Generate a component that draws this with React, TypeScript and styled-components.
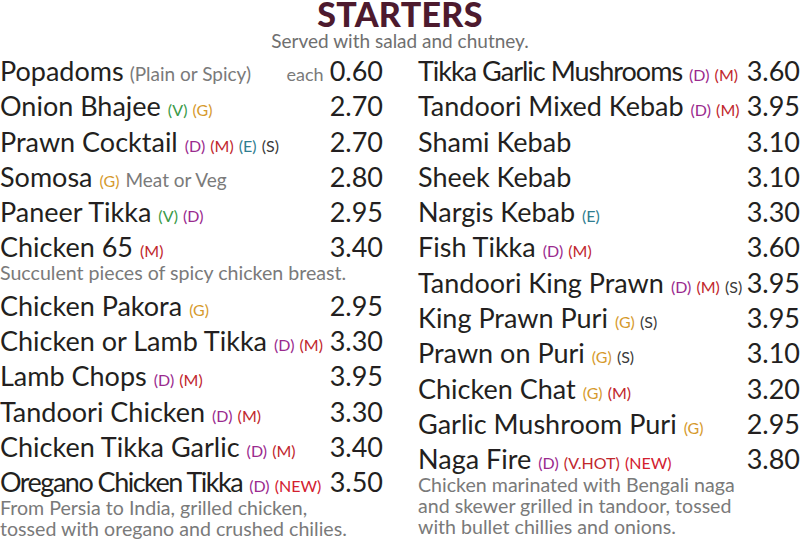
import * as React from 'react';
import styled, { createGlobalStyle } from 'styled-components';

const GlobalStyle = createGlobalStyle`
	html, body {
		margin: 0;
		padding: 0;
		background: #ffffff;
	}
	body {
		font-family: Lato, 'Noto Sans', sans-serif;
		color: #231f20;
		overflow: hidden;
	}
`;

type TagKind = 'V' | 'G' | 'D' | 'M' | 'E' | 'S' | 'V.HOT' | 'NEW';

interface Item {
	name: string;
	tags?: TagKind[];
	note?: string;
	each?: boolean;
	price: string;
	desc?: string[];
	tight?: number;
}

const tagColours: Record<TagKind, string> = {
	V: '#3a9a48',
	G: '#d69a2d',
	D: '#9a2a8e',
	M: '#c1272d',
	E: '#2f7d90',
	S: '#3a3a3a',
	'V.HOT': '#c1272d',
	NEW: '#d3202f',
};

const leftItems: Item[] = [
	{ name: 'Popadoms', note: '(Plain or Spicy)', each: true, price: '0.60' },
	{ name: 'Onion Bhajee', tags: ['V', 'G'], price: '2.70' },
	{ name: 'Prawn Cocktail', tags: ['D', 'M', 'E', 'S'], price: '2.70' },
	{ name: 'Somosa', tags: ['G'], note: 'Meat or Veg', price: '2.80' },
	{ name: 'Paneer Tikka', tags: ['V', 'D'], price: '2.95' },
	{
		name: 'Chicken 65',
		tags: ['M'],
		price: '3.40',
		desc: ['Succulent pieces of spicy chicken breast.'],
	},
	{ name: 'Chicken Pakora', tags: ['G'], price: '2.95' },
	{ name: 'Chicken or Lamb Tikka', tags: ['D', 'M'], price: '3.30' },
	{ name: 'Lamb Chops', tags: ['D', 'M'], price: '3.95' },
	{ name: 'Tandoori Chicken', tags: ['D', 'M'], price: '3.30' },
	{ name: 'Chicken Tikka Garlic', tags: ['D', 'M'], price: '3.40' },
	{
		name: 'Oregano Chicken Tikka',
		tags: ['D', 'NEW'],
		price: '3.50',
		tight: -1.5,
		desc: [
			'From Persia to India, grilled chicken,',
			'tossed with oregano and crushed chilies.',
		],
	},
];

const rightItems: Item[] = [
	{ name: 'Tikka Garlic Mushrooms', tags: ['D', 'M'], price: '3.60', tight: -1 },
	{ name: 'Tandoori Mixed Kebab', tags: ['D', 'M'], price: '3.95' },
	{ name: 'Shami Kebab', price: '3.10' },
	{ name: 'Sheek Kebab', price: '3.10' },
	{ name: 'Nargis Kebab', tags: ['E'], price: '3.30' },
	{ name: 'Fish Tikka', tags: ['D', 'M'], price: '3.60' },
	{ name: 'Tandoori King Prawn', tags: ['D', 'M', 'S'], price: '3.95' },
	{ name: 'King Prawn Puri', tags: ['G', 'S'], price: '3.95' },
	{ name: 'Prawn on Puri', tags: ['G', 'S'], price: '3.10' },
	{ name: 'Chicken Chat', tags: ['G', 'M'], price: '3.20' },
	{ name: 'Garlic Mushroom Puri', tags: ['G'], price: '2.95' },
	{
		name: 'Naga Fire',
		tags: ['D', 'V.HOT', 'NEW'],
		price: '3.80',
		desc: [
			'Chicken marinated with Bengali naga',
			'and skewer grilled in tandoor, tossed',
			'with bullet chillies and onions.',
		],
	},
];

const Page = styled.main`
	width: 800px;
	height: 539px;
	display: flex;
	flex-direction: column;
	overflow: hidden;
`;

const Header = styled.header`
	display: flex;
	flex-direction: column;
	align-items: center;
	margin-bottom: 1px;
`;

const Title = styled.h1`
	margin: 0;
	font-family: Lato, sans-serif;
	font-weight: 900;
	font-size: 34px;
	line-height: 28px;
	letter-spacing: 0.3px;
	color: #4d1a2e;
`;

const Subtitle = styled.p`
	margin: 2px 0 0;
	font-size: 19px;
	line-height: 22px;
	color: #6f6f6f;
`;

const Columns = styled.div`
	display: grid;
	grid-template-columns: 383px 382px;
	column-gap: 35px;
`;

const Column = styled.section`
	display: flex;
	flex-direction: column;
	min-width: 0;
`;

const Row = styled.div`
	display: flex;
	justify-content: space-between;
	align-items: baseline;
	font-size: 27px;
	line-height: 35.3px;
	white-space: nowrap;
`;

const Name = styled.span<{ $tight?: number }>`
	letter-spacing: ${(p) => (p.$tight ? `${p.$tight}px` : 'normal')};
`;

const Tags = styled.span`
	margin-left: 7px;
	font-size: 16px;
	line-height: 1;
	letter-spacing: normal;
	word-spacing: 1px;
`;

const Tag = styled.span<{ $colour: string }>`
	color: ${(p) => p.$colour};
`;

const Note = styled.span`
	margin-left: 6px;
	font-size: 19px;
	line-height: 1;
	letter-spacing: normal;
	color: #7a7a7a;
`;

const PriceWrap = styled.span`
	display: flex;
	align-items: baseline;
	gap: 6px;
`;

const Each = styled.span`
	font-size: 18px;
	line-height: 1;
	color: #7a7a7a;
`;

const Price = styled.span`
	font-size: 27px;
`;

const Desc = styled.p`
	margin: -3px 0 5px;
	font-size: 19.6px;
	line-height: 21px;
	color: #7a7a7a;
	white-space: nowrap;
`;

const MenuItem: React.FC<{ item: Item }> = ({ item }) => (
	<>
		<Row>
			<Name $tight={item.tight}>
				{item.name}
				{item.tags && (
					<Tags>
						{item.tags.map((t, i) => (
							<React.Fragment key={t}>
								{i > 0 && ' '}
								<Tag $colour={tagColours[t]}>({t})</Tag>
							</React.Fragment>
						))}
					</Tags>
				)}
				{item.note && <Note>{item.note}</Note>}
			</Name>
			<PriceWrap>
				{item.each && <Each>each</Each>}
				<Price>{item.price}</Price>
			</PriceWrap>
		</Row>
		{item.desc && (
			<Desc>
				{item.desc.map((line, i) => (
					<React.Fragment key={i}>
						{i > 0 && <br />}
						{line}
					</React.Fragment>
				))}
			</Desc>
		)}
	</>
);

const App: React.FC = () => {
	return (
		<Page>
			<GlobalStyle />
			<Header>
				<Title>STARTERS</Title>
				<Subtitle>Served with salad and chutney.</Subtitle>
			</Header>
			<Columns>
				<Column>
					{leftItems.map((item) => (
						<MenuItem key={item.name} item={item} />
					))}
				</Column>
				<Column>
					{rightItems.map((item) => (
						<MenuItem key={item.name} item={item} />
					))}
				</Column>
			</Columns>
		</Page>
	);
};

export default App;
